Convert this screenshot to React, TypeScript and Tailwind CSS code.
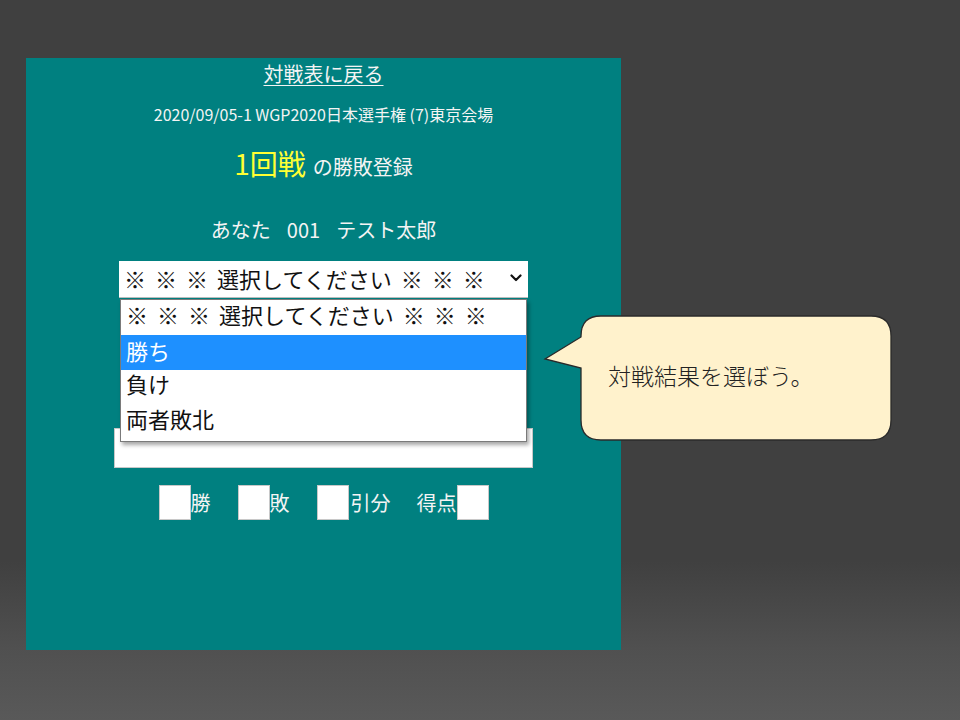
import React from "react";

const font = { fontFamily: '"Noto Sans CJK JP", "Noto Sans", sans-serif' };

function Chevron() {
  return (
    <svg width="12" height="8" viewBox="0 0 12 8" className="shrink-0">
      <polyline points="1.5,1.5 6,6 10.5,1.5" fill="none" stroke="#111" strokeWidth="2.2" strokeLinecap="round" strokeLinejoin="round" />
    </svg>
  );
}

function Box() {
  return <div className="w-[32px] h-[35px] bg-white border border-[#c8c8c8]" />;
}

function Placeholder() {
  return (
    <span className="flex items-center gap-[9px] text-[22px] leading-[30px] whitespace-nowrap">
      <span>※</span>
      <span>※</span>
      <span>※</span>
      <span>選択してください</span>
      <span>※</span>
      <span>※</span>
      <span>※</span>
    </span>
  );
}

export default function App() {
  return (
    <div
      className="relative w-[960px] h-[720px] overflow-hidden pt-[58px] pl-[26px] bg-[linear-gradient(to_bottom,#404040_0%,#404040_78%,#505050_90%,#595959_100%)]"
      style={font}
    >
      <div className="w-[595px] h-[592px] bg-[#008080] flex flex-col items-center text-[#f4f4f4]">
        <a className="mt-[3px] text-[20px] leading-[26px] underline underline-offset-[3px] decoration-1">対戦表に戻る</a>
        <div className="mt-[17px] text-[16px] leading-[20px]">2020/09/05-1 WGP2020日本選手権 (7)東京会場</div>
        <div className="mt-[21px] h-[36px] flex items-baseline gap-[7px]">
          <span className="text-[28px] leading-[36px] text-[#ffff33]">1回戦</span>
          <span className="text-[20px] leading-[36px]">の勝敗登録</span>
        </div>
        <div className="mt-[36px] text-[20px] leading-[26px] flex gap-[16px]">
          <span>あなた</span>
          <span>001</span>
          <span>テスト太郎</span>
        </div>
        <div className="relative mt-[18px] w-[409px] h-[37px] bg-white border-b border-[#bdbdbd] flex items-center justify-between pl-[5px] pr-[6px] pb-[2px] text-[#111]">
          <Placeholder />
          <Chevron />
          <div className="absolute left-[1px] top-[38px] z-10 w-[407px] bg-white border border-[#7a7a7a] shadow-[2px_3px_4px_rgba(0,0,0,0.35)] pb-[3px]">
            <div className="h-[35px] flex items-center pl-[5px] pb-[7px] text-[#111]">
              <Placeholder />
            </div>
            <div className="h-[35px] flex items-center pl-[5px] pb-[5px] text-[22px] bg-[#1e90ff] text-white">勝ち</div>
            <div className="h-[34px] flex items-center pl-[5px] pb-[7px] text-[22px] text-[#111]">負け</div>
            <div className="h-[34px] flex items-center pl-[5px] pb-[6px] text-[22px] text-[#111]">両者敗北</div>
          </div>
        </div>
        <div className="mt-[130px] w-[419px] h-[40px] bg-white border border-[#c8c8c8]" />
        <div className="mt-[17px] flex items-center text-[20px] leading-[35px]">
          <Box />
          <span>勝</span>
          <div className="w-[27px]" />
          <Box />
          <span>敗</span>
          <div className="w-[27px]" />
          <Box />
          <span className="ml-[2px]">引分</span>
          <div className="w-[26px]" />
          <span>得点</span>
          <Box />
        </div>
      </div>

      <div className="absolute left-[543px] top-[315px] w-[350px] h-[127px]">
        <svg width="350" height="127" viewBox="0 0 350 127" className="absolute inset-0">
          <path
            d="M58 1 H328 Q348 1 348 21 V105 Q348 125 328 125 H58 Q38 125 38 105 V53 L2 44 L38 22 V21 Q38 1 58 1 Z"
            fill="#fff2cc"
            stroke="#2a2a2a"
            strokeWidth="1.3"
          />
        </svg>
        <div className="absolute left-[65px] top-[45px] text-[23px] leading-[30px] text-[#222] font-light">対戦結果を選ぼう。</div>
      </div>
    </div>
  );
}
